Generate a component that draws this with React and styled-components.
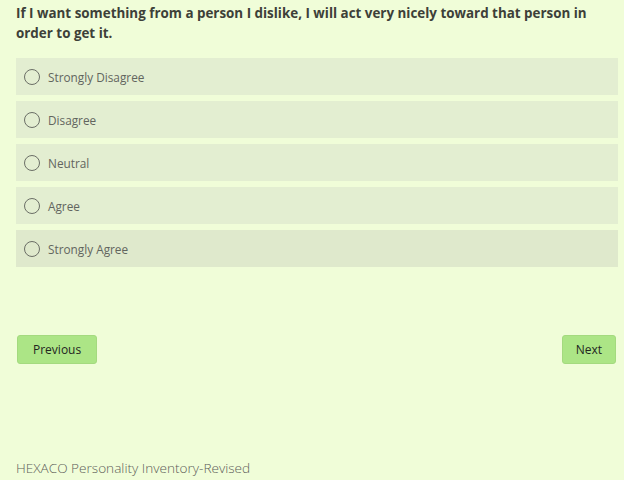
import React, { useState } from 'react'
import styled, { createGlobalStyle } from 'styled-components'

const GlobalStyle = createGlobalStyle`
    html, body {
        margin: 0;
        padding: 0;
        background: #f0fdd8;
    }
    body {
        font-family: "Open Sans", "Noto Sans", sans-serif;
    }
`

const Page = styled.div`
    display: flex;
    flex-direction: column;
    height: 480px;
    padding: 3px 6px 0 16px;
    box-sizing: border-box;
`

const Question = styled.h2`
    margin: 0 0 15px;
    font-size: 13.4px;
    font-weight: 700;
    line-height: 20px;
    color: #3d4038;
`

const Options = styled.div`
    display: flex;
    flex-direction: column;
    gap: 6px;
`

const Option = styled.label`
    display: flex;
    align-items: center;
    gap: 8px;
    height: 37px;
    padding: 0 8px;
    background: ${p => (p.$dark ? '#dfe9cc' : '#e3eed1')};
    color: #62655e;
    font-size: 11.8px;
    cursor: pointer;
`

const Radio = styled.span`
    width: 14px;
    height: 14px;
    border: 1.6px solid #6b6e66;
    border-radius: 50%;
    box-sizing: content-box;
    display: inline-flex;
    align-items: center;
    justify-content: center;
    flex-shrink: 0;
    &::after {
        content: "";
        width: 8px;
        height: 8px;
        border-radius: 50%;
        background: ${p => (p.$checked ? '#6b6e66' : 'transparent')};
    }
`

const Nav = styled.div`
    display: flex;
    justify-content: space-between;
    margin-top: 68px;
    padding-left: 1px;
    padding-right: 2px;
`

const Button = styled.button`
    height: 29px;
    padding: 0 ${p => p.$pad || 14}px;
    border: 1px solid #a4da7f;
    border-radius: 3px;
    background: #ace586;
    color: #23261f;
    font-family: "Open Sans", "Noto Sans", sans-serif;
    font-size: 12px;
    font-weight: 500;
    cursor: pointer;
`

const Footer = styled.div`
    margin-top: auto;
    padding-bottom: 3px;
    font-size: 13.6px;
    color: #5d6058;
    font-weight: 300;
`

const choices = ['Strongly Disagree', 'Disagree', 'Neutral', 'Agree', 'Strongly Agree']

const App = () => {
    const [picked, setPicked] = useState(null)
    return (
        <Page>
            <GlobalStyle />
            <Question>
                If I want something from a person I dislike, I will act very nicely toward that person in order to get it.
            </Question>
            <Options>
                {choices.map((c, i) => (
                    <Option key={c} $dark={i === 4} onClick={() => setPicked(i)}>
                        <Radio $checked={picked === i} />
                        {c}
                    </Option>
                ))}
            </Options>
            <Nav>
                <Button $pad={15}>Previous</Button>
                <Button $pad={13}>Next</Button>
            </Nav>
            <Footer>HEXACO Personality Inventory-Revised</Footer>
        </Page>
    )
}

export default App
